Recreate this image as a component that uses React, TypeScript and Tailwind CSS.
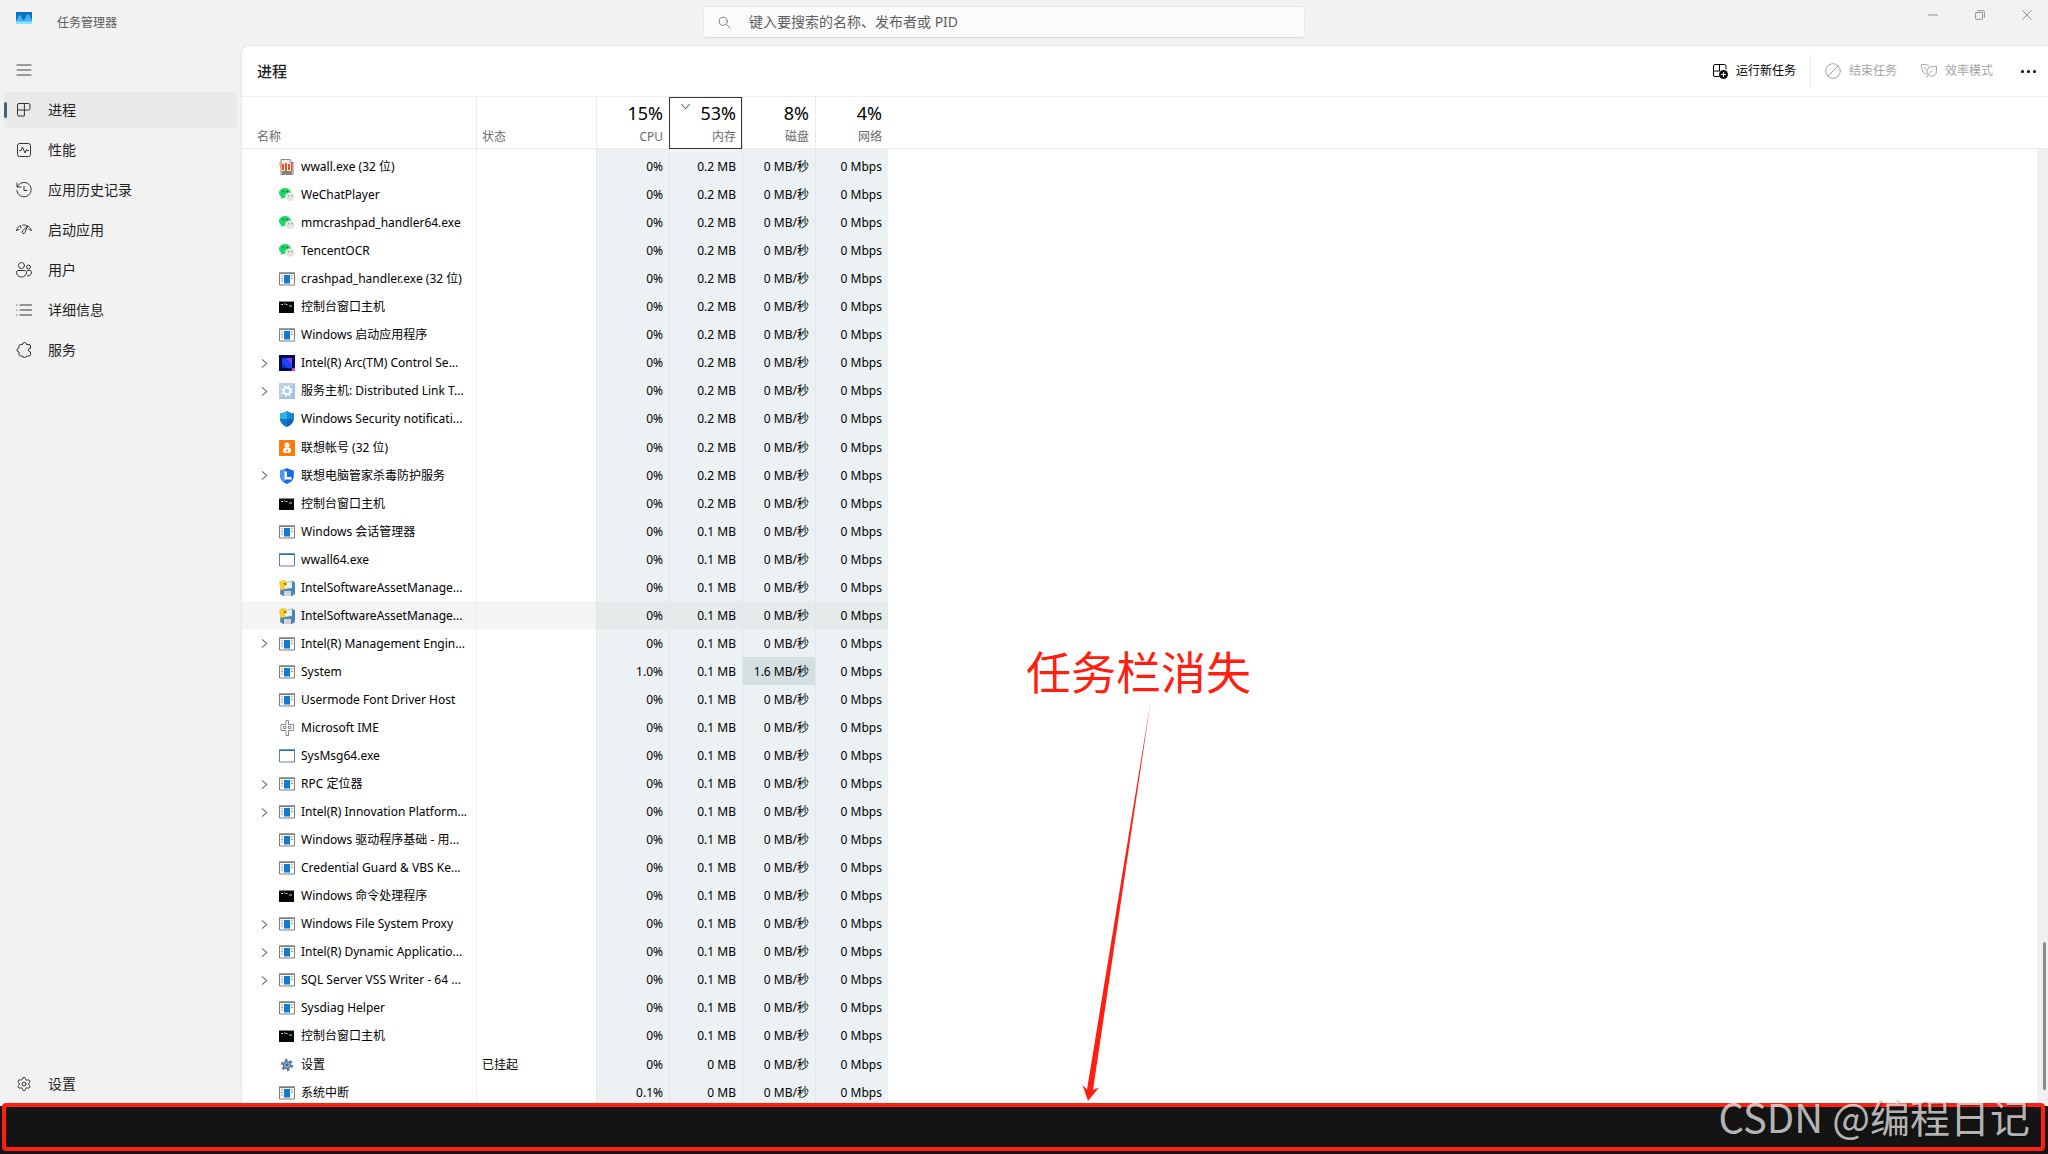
import { ReactElement, ReactNode } from 'react'
import { Settings } from 'lucide-react'

type IconName =
  | 'wwall'
  | 'wechat'
  | 'app'
  | 'cmd'
  | 'arc'
  | 'service'
  | 'shield'
  | 'account'
  | 'lenovo'
  | 'window'
  | 'installer'
  | 'ime'
  | 'gear'

interface Process {
  name: string
  icon: IconName
  memory: string
  cpu?: string
  disk?: string
  status?: string
  group?: boolean
  hovered?: boolean
}

const processes: Process[] = [
  { name: 'wwall.exe (32 位)', icon: 'wwall', memory: '0.2 MB' },
  { name: 'WeChatPlayer', icon: 'wechat', memory: '0.2 MB' },
  { name: 'mmcrashpad_handler64.exe', icon: 'wechat', memory: '0.2 MB' },
  { name: 'TencentOCR', icon: 'wechat', memory: '0.2 MB' },
  { name: 'crashpad_handler.exe (32 位)', icon: 'app', memory: '0.2 MB' },
  { name: '控制台窗口主机', icon: 'cmd', memory: '0.2 MB' },
  { name: 'Windows 启动应用程序', icon: 'app', memory: '0.2 MB' },
  { name: 'Intel(R) Arc(TM) Control Se...', icon: 'arc', memory: '0.2 MB', group: true },
  { name: '服务主机: Distributed Link T...', icon: 'service', memory: '0.2 MB', group: true },
  { name: 'Windows Security notificati...', icon: 'shield', memory: '0.2 MB' },
  { name: '联想帐号 (32 位)', icon: 'account', memory: '0.2 MB' },
  { name: '联想电脑管家杀毒防护服务', icon: 'lenovo', memory: '0.2 MB', group: true },
  { name: '控制台窗口主机', icon: 'cmd', memory: '0.2 MB' },
  { name: 'Windows 会话管理器', icon: 'app', memory: '0.1 MB' },
  { name: 'wwall64.exe', icon: 'window', memory: '0.1 MB' },
  { name: 'IntelSoftwareAssetManage...', icon: 'installer', memory: '0.1 MB' },
  { name: 'IntelSoftwareAssetManage...', icon: 'installer', memory: '0.1 MB', hovered: true },
  { name: 'Intel(R) Management Engin...', icon: 'app', memory: '0.1 MB', group: true },
  { name: 'System', icon: 'app', memory: '0.1 MB', cpu: '1.0%', disk: '1.6 MB/秒' },
  { name: 'Usermode Font Driver Host', icon: 'app', memory: '0.1 MB' },
  { name: 'Microsoft IME', icon: 'ime', memory: '0.1 MB' },
  { name: 'SysMsg64.exe', icon: 'window', memory: '0.1 MB' },
  { name: 'RPC 定位器', icon: 'app', memory: '0.1 MB', group: true },
  { name: 'Intel(R) Innovation Platform...', icon: 'app', memory: '0.1 MB', group: true },
  { name: 'Windows 驱动程序基础 - 用...', icon: 'app', memory: '0.1 MB' },
  { name: 'Credential Guard & VBS Ke...', icon: 'app', memory: '0.1 MB' },
  { name: 'Windows 命令处理程序', icon: 'cmd', memory: '0.1 MB' },
  { name: 'Windows File System Proxy', icon: 'app', memory: '0.1 MB', group: true },
  { name: 'Intel(R) Dynamic Applicatio...', icon: 'app', memory: '0.1 MB', group: true },
  { name: 'SQL Server VSS Writer - 64 ...', icon: 'app', memory: '0.1 MB', group: true },
  { name: 'Sysdiag Helper', icon: 'app', memory: '0.1 MB' },
  { name: '控制台窗口主机', icon: 'cmd', memory: '0.1 MB' },
  { name: '设置', icon: 'gear', memory: '0 MB', status: '已挂起' },
  { name: '系统中断', icon: 'app', memory: '0 MB', cpu: '0.1%' },
]

const usage = [
  { value: '15%', label: 'CPU' },
  { value: '53%', label: '内存', sorted: true },
  { value: '8%', label: '磁盘' },
  { value: '4%', label: '网络' },
]

const processIcons: Record<IconName, ReactNode> = {
  wwall: (
    <>
      <path d="M2 .5h9l3 3v12H2z" fill="#f4f1ee" stroke="#8d8985" />
      <path d="M11 .5v3h3" fill="#fff" stroke="#8d8985" />
      <path d="M0 4l3-1v7l-2-2z" fill="#f0a35a" />
      <path d="M3 5h2v6H3zM6 4h2v8H6zM9 5h2v6H9zM12 4h1.5v8H12z" fill="#e8542c" />
      <path d="M3 12h10v3H3z" fill="#8b8078" />
    </>
  ),
  wechat: (
    <>
      <path
        d="M6 1C2.700 1 0 3.200 0 6c0 1.600.9 3 2.200 3.900L1.700 12l2.200-1.200c.7.2 1.400.3 2.100.3 3.300 0 6-2.300 6-5.100S9.300 1 6 1z"
        fill="#20d76a"
      />
      <circle cx="4" cy="4.5" r=".9" fill="#0b7a3a" />
      <circle cx="8" cy="4.5" r=".9" fill="#0b7a3a" />
      <path
        d="M11 5.600c-2.800 0-5 1.800-5 4.100s2.200 4.100 5 4.100c.6 0 1.100-.1 1.600-.2l1.700.9-.4-1.600c1.200-.8 1.900-1.900 1.900-3.200 0-2.300-2.100-4.100-4.800-4.100z"
        fill="#e4e4e4"
      />
      <circle cx="9.5" cy="8.8" r=".7" fill="#8c8c8c" />
      <circle cx="12.7" cy="8.8" r=".7" fill="#8c8c8c" />
    </>
  ),
  app: (
    <>
      <path d="M.5 2h15v12H.5z" fill="#fafafa" stroke="#7d8080" />
      <path d="M0 1.500h16v1.500H0z" fill="#7d8080" />
      <path d="M5 4h6v8.500H5z" fill="#0f7ad0" />
      <path d="M2 5h2M2 7.500h2M2 10h2M12 5h2M12 7.500h2" stroke="#9a9d9d" />
    </>
  ),
  cmd: (
    <>
      <path d="M0 2h15v12H0z" fill="#050505" />
      <path d="M0 2h15v1H0z" fill="#8e8e8e" />
      <path d="M2 5.500h2M5 5h1.500M7 5.500h1.500M10 7h3" stroke="#d0d0d0" />
    </>
  ),
  arc: (
    <>
      <path d="M0 0h16v16H0z" fill="#050a4a" />
      <path d="M3 3h10v10H3z" fill="#1746f2" />
      <path d="M13 3v7L7 3z" fill="#8a3df0" />
      <path d="M3 13V8l6 5z" fill="#0f2fb8" />
      <path d="M13 13h3v3h-3z" fill="#e03cf0" />
    </>
  ),
  service: (
    <>
      <path d="M0 0h16v16H0z" fill="#a2c3e4" />
      <path d="M0 0h16L0 16z" fill="#b4d2ec" />
      <circle cx="8" cy="8" r="3.2" fill="#a9cdec" stroke="#fff" strokeWidth="2" />
      <circle cx="8" cy="8" r="5" fill="none" stroke="#fff" strokeWidth="1.6" strokeDasharray="1.96 1.96" />
    </>
  ),
  shield: (
    <>
      <path d="M8 0c2 1.500 4.500 2.300 7 2.400V7c0 4-2.800 7.200-7 9-4.200-1.800-7-5-7-9V2.400C3.500 2.300 6 1.500 8 0z" fill="#0b63b8" />
      <path d="M8 0v8H1V2.400C3.500 2.300 6 1.500 8 0z" fill="#2fb4ea" />
      <path d="M8 0c2 1.500 4.500 2.300 7 2.400V8H8z" fill="#1a8ad8" />
      <path d="M1 8h7v8C4 14.200 1.200 11.500 1 8z" fill="#1277c8" />
    </>
  ),
  account: (
    <>
      <rect width="16" height="16" rx="1" fill="#fb7a0a" />
      <circle cx="8" cy="5" r="2.6" fill="#fff" />
      <path d="M4 10.500C4 8 6 7.500 8 7.500s4 .5 4 3-1.500 2.500-4 2.500-4 0-4-2.500z" fill="#fff" />
      <path d="M8 8.500l1 2.500-1 1-1-1z" fill="#fb7a0a" />
    </>
  ),
  lenovo: (
    <>
      <path d="M8 0c2 1.300 4.200 2 6.800 2.200V8c0 3.500-2.500 6.300-6.800 8-4.300-1.700-6.800-4.500-6.800-8V2.200C3.800 2 6 1.300 8 0z" fill="#1a6be8" />
      <path d="M1.200 8V2.200C3 2.100 4.500 1.700 6 1v13C3 12.800 1.200 10.700 1.200 8z" fill="#4b97f7" />
      <path d="M5.500 3.500H8V9h4.500v2.500h-7z" fill="#fff" />
    </>
  ),
  window: (
    <>
      <path d="M.5 2h15v12H.5z" fill="#fff" stroke="#5f83b8" />
      <path d="M0 1.500h16V3H0z" fill="#1f6fc4" />
    </>
  ),
  installer: (
    <>
      <path d="M2 4l11-3.500 3 2V14l-3 2H4l-3-2z" fill="#4c86b5" />
      <path d="M5 3l8-2v7l-8 1z" fill="#e9eef3" />
      <path d="M5 11h7v5H5z" fill="#cfd5da" />
      <path d="M0 1.500L4 0l4 1v4L6 6.500V9L3 10 1 8z" fill="#f6cf33" />
      <circle cx="6" cy="4" r=".9" fill="#5b4a10" />
    </>
  ),
  ime: (
    <path
      d="M7 .5h2.500v4h5v6h-5v5H7v-5H2v-6h5zM4.500 6.500v2H7v-2zM9.500 6.500v2H12v-2z"
      fill="#fff"
      stroke="#8a8a8a"
    />
  ),
  gear: (
    <>
      <circle cx="8" cy="8" r="5" fill="none" stroke="#6e7d8c" strokeWidth="2.5" strokeDasharray="2.6 2.6" />
      <circle cx="8" cy="8" r="3.5" fill="#a6c8e8" stroke="#5c6f82" strokeWidth="1.5" />
      <circle cx="8" cy="8" r="1.8" fill="#1b6fc2" />
    </>
  ),
}

function ProcessIcon({ icon }: { icon: IconName }): ReactElement {
  return (
    <svg viewBox="0 0 16 16" className="size-4 shrink-0" aria-hidden="true">
      {processIcons[icon]}
    </svg>
  )
}

function LineIcon({ children, className = 'size-4' }: { children: ReactNode; className?: string }): ReactElement {
  return (
    <svg
      viewBox="0 0 16 16"
      className={className}
      fill="none"
      stroke="currentColor"
      strokeLinecap="round"
      strokeLinejoin="round"
      aria-hidden="true"
    >
      {children}
    </svg>
  )
}

const navItems = [
  {
    label: '进程',
    active: true,
    icon: <path d="M8 1.500H3A1.500 1.500 0 0 0 1.500 3v9.500A1.500 1.500 0 0 0 3 14h5zM8 1.500h4.500A1.500 1.500 0 0 1 14 3v3.500A1.500 1.500 0 0 1 12.500 8h-11" />,
  },
  {
    label: '性能',
    icon: (
      <>
        <rect x="1.5" y="1.5" width="13" height="13" rx="2" />
        <path d="M3.500 8.500h1.500L6.500 5l2.500 6 1.500-3.500.5 1h1.500" />
      </>
    ),
  },
  {
    label: '应用历史记录',
    icon: <path d="M1 1v4h4M1.300 4.800A7.200 7.200 0 1 1 .8 8.500M8 4.500V8.500h3" />,
  },
  {
    label: '启动应用',
    icon: (
      <>
        <path d="M.5 8.500C1.500 5.500 3 4 4.500 3.500L5 6M6.500 3.200C8 2.800 9.500 3 10.500 3.500M12.500 4.500c1.500 1 2.500 2.500 3 4L13 7.500M.5 8.500L3 7.500" />
        <path d="M11.500 4L9 10.500a1.500 1.500 0 1 1-2.500-1.500z" />
      </>
    ),
  },
  {
    label: '用户',
    icon: (
      <>
        <circle cx="5.5" cy="3.5" r="3" />
        <circle cx="12.5" cy="5" r="2" />
        <path d="M2.200 8.500h6.600c.9 0 1.700.7 1.700 1.700 0 3-2 4.800-5 4.800s-5-1.800-5-4.800c0-1 .8-1.700 1.700-1.700zM11.500 8.500h2.500c.8 0 1.500.7 1.500 1.500 0 2.500-1.500 4-4 4" />
      </>
    ),
  },
  {
    label: '详细信息',
    icon: <path d="M.7 3h.1M.7 8h.1M.7 13h.1M4 3h11.500M4 8h11.500M4 13h11.500" />,
  },
  {
    label: '服务',
    icon: (
      <path d="M14.500 6V4a1.500 1.500 0 0 0-1.500-1.500h-2.500a2 2 0 0 0-4 0H4.500A1.500 1.500 0 0 0 3 4v2a2 2 0 0 0 0 4v2.500A1.500 1.500 0 0 0 4.500 14h2a2 1.500 0 0 0 4 0H13a1.500 1.500 0 0 0 1.500-1.500V10a2 2 0 1 1 0-4z" />
    ),
  },
]

function NavItem({ label, icon, active }: { label: string; icon: ReactNode; active?: boolean }): ReactElement {
  return (
    <button
      type="button"
      className={`relative flex h-9 w-full items-center gap-4 rounded pl-3 text-sm ${active ? 'bg-[#e9e9e9]' : ''}`}
    >
      {active && <span className="absolute top-1/2 left-0 h-4 w-[3px] -translate-y-1/2 rounded bg-[#4a6373]" />}
      <span className="text-[#333]">{icon}</span>
      {label}
    </button>
  )
}

function TitleBar(): ReactElement {
  return (
    <header className="grid h-[45px] shrink-0 grid-cols-[1fr_602px_1fr] pr-10">
      <div className="flex items-center gap-[25px] pl-4">
        <svg viewBox="0 0 16 12" className="mb-[10px] h-3 w-4" aria-hidden="true">
          <path d="M0 0h16v12H0z" fill="#0c6fc0" />
          <path d="M0 9l3-6 2 1 2 4 2-1 2-5 2 1 3 5v4H0z" fill="#3cb4ee" />
          <path d="M0 9.500h16V12H0z" fill="#8fe0fb" />
        </svg>
        <span className="text-xs text-[#5a5a5a]">任务管理器</span>
      </div>
      <label className="mt-[6px] flex h-8 items-center rounded border border-[#e9e9e9] border-b-[#d9d9d9] bg-[#fbfbfb] pl-[14px]">
        <LineIcon className="size-[13px] text-[#666]">
          <circle cx="6.5" cy="6.5" r="5" />
          <path d="M10.500 10.500l4.500 4.500" />
        </LineIcon>
        <input
          type="search"
          aria-label="搜索"
          placeholder="键入要搜索的名称、发布者或 PID"
          className="ml-[18px] flex-1 bg-transparent text-sm outline-none placeholder:text-[#5f5f5f]"
        />
      </label>
      <div className="-mr-10 flex h-[29px] justify-end gap-1 text-[#8c8c8c]">
        <button type="button" aria-label="最小化" className="flex w-[43px] items-center justify-center">
          <LineIcon className="size-[10px]">
            <path d="M0 8h16" strokeWidth="1.5" />
          </LineIcon>
        </button>
        <button type="button" aria-label="还原" className="flex w-[43px] items-center justify-center">
          <LineIcon className="size-[10px]">
            <rect x="1" y="4" width="11" height="11" rx="1" strokeWidth="1.5" />
            <path d="M4 1h8.500A2.500 2.500 0 0 1 15 3.500V12" strokeWidth="1.5" />
          </LineIcon>
        </button>
        <button type="button" aria-label="关闭" className="flex w-[43px] items-center justify-center">
          <LineIcon className="size-[10px]">
            <path d="M1 1l14 14M15 1L1 15" strokeWidth="1.5" />
          </LineIcon>
        </button>
      </div>
    </header>
  )
}

function Toolbar(): ReactElement {
  return (
    <div className="flex h-[51px] shrink-0 items-center border-b border-[#efefef] pr-[10px] pl-[15px]">
      <h1 className="flex-1 text-[15px] font-medium">进程</h1>
      <button type="button" className="flex items-center gap-2 text-xs text-black">
        <LineIcon>
          <path d="M7 13.500H3A1.500 1.500 0 0 1 1.500 12V3A1.500 1.500 0 0 1 3 1.500h9.500A1.500 1.500 0 0 1 14 3v3M7.500 1.500V8M1.500 8H7" />
          <circle cx="11.5" cy="11.5" r="4.5" fill="#111" stroke="none" />
          <path d="M11.500 9.500v4M9.500 11.500h4" stroke="#fff" />
        </LineIcon>
        运行新任务
      </button>
      <span className="mr-[14px] ml-[14px] h-8 w-px bg-[#ececec]" />
      <button type="button" disabled className="flex items-center gap-2 text-xs text-[#a5a5a5]">
        <LineIcon>
          <circle cx="8" cy="8" r="7.3" />
          <path d="M3 13L13 3" />
        </LineIcon>
        结束任务
      </button>
      <button type="button" disabled className="ml-6 flex items-center gap-2 text-xs text-[#a5a5a5]">
        <LineIcon>
          <path d="M5 11C1.500 10 .5 7 .5 1.500c3.500 0 6.500-.5 8 2.500M3 4l2.500 3" />
          <path d="M15.500 3.500c0 5 .5 9.500-4.500 9.500-3.500 0-5-1.500-5-4 0-5 4.500-5.500 9.500-5.500zM11 8c-2 1-4 3-5.500 6.500" />
        </LineIcon>
        效率模式
      </button>
      <button type="button" aria-label="更多" className="ml-[26px] flex gap-[3px] p-[2px]">
        <span className="size-[3px] rounded-full bg-black" />
        <span className="size-[3px] rounded-full bg-black" />
        <span className="size-[3px] rounded-full bg-black" />
      </button>
    </div>
  )
}

function ProcessRow({ process }: { process: Process }): ReactElement {
  const { name, icon, memory, cpu = '0%', disk = '0 MB/秒', status, group, hovered } = process
  const plain = hovered ? 'bg-[#f5f5f5]' : ''
  const heat = hovered ? 'bg-[#e5ebeb]' : 'bg-[#ecf2f3]'
  const busy = disk === '0 MB/秒' ? heat : 'bg-[#d4dfe2]'
  const cell = 'border-l border-[#e1e7e8] pt-[5px] pb-[3px] pr-[6px] text-right'

  return (
    <tr>
      <td className={`pt-[5px] pb-[3px] pl-[18px] ${plain}`}>
        <div className="flex items-center">
          <span className="flex w-[19px] shrink-0">
            {group && (
              <button type="button" aria-label={`展开 ${name}`}>
                <LineIcon className="size-[9px] text-[#777]">
                  <path d="M4 1l8 7-8 7" strokeWidth="2" />
                </LineIcon>
              </button>
            )}
          </span>
          <ProcessIcon icon={icon} />
          <span className="ml-[6px]">{name}</span>
        </div>
      </td>
      <td className={`border-l border-[#efefef] pt-[5px] pb-[3px] pl-[5px] ${plain}`}>{status}</td>
      <td className={`${cell} ${heat}`}>{cpu}</td>
      <td className={`${cell} ${heat}`}>{memory}</td>
      <td className={`${cell} ${busy}`}>{disk}</td>
      <td className={`${cell} ${heat}`}>0 Mbps</td>
      <td />
    </tr>
  )
}

function ProcessTable(): ReactElement {
  return (
    <table className="h-full w-full table-fixed border-separate border-spacing-0 text-xs leading-5 whitespace-nowrap text-black">
      <colgroup>
        <col className="w-[234px]" />
        <col className="w-[120px]" />
        <col className="w-[73px]" />
        <col className="w-[73px]" />
        <col className="w-[73px]" />
        <col className="w-[73px]" />
        <col />
      </colgroup>
      <thead className="text-[#6a6a6a]">
        <tr className="h-[52px]">
          <th className="border-b border-[#ececec] pb-px pl-[15px] text-left align-bottom font-normal">名称</th>
          <th className="border-b border-l border-[#ececec] pb-px pl-[5px] text-left align-bottom font-normal">状态</th>
          {usage.map(({ value, label, sorted }) => (
            <th
              key={label}
              className={`relative border-b border-l border-[#ececec] pr-[6px] pb-px text-right align-bottom font-normal ${
                sorted ? 'outline outline-1 -outline-offset-1 outline-[#333]' : ''
              }`}
            >
              {sorted && (
                <LineIcon className="absolute top-[5px] left-[11px] size-[9px]">
                  <path d="M1 4l7 8 7-8" strokeWidth="2" />
                </LineIcon>
              )}
              <span className="block text-lg leading-7 text-black">{value}</span>
              <span className="block">{label}</span>
            </th>
          ))}
          <th className="border-b border-[#ececec]" />
        </tr>
      </thead>
      <tbody className="[&>tr:first-child>td]:pt-2">
        {processes.map((process, i) => (
          <ProcessRow key={i} process={process} />
        ))}
      </tbody>
    </table>
  )
}

export default function App(): ReactElement {
  return (
    <div className="flex h-screen flex-col overflow-hidden bg-[#f2f2f2] font-['Noto_Sans','Noto_Sans_CJK_SC',sans-serif] text-[#1f1f1f]">
      <TitleBar />
      <div className="flex min-h-0 flex-1">
        <nav className="flex w-[241px] shrink-0 flex-col gap-1 px-1 pt-[7px] pb-1">
          <button type="button" aria-label="导航" className="flex h-9 items-center pl-3 text-[#444]">
            <LineIcon>
              <path d="M1 3h14M1 8h14M1 13h14" />
            </LineIcon>
          </button>
          {navItems.map(({ label, icon, active }) => (
            <NavItem key={label} label={label} active={active} icon={<LineIcon>{icon}</LineIcon>} />
          ))}
          <div className="mt-auto">
            <NavItem label="设置" icon={<Settings className="size-4" strokeWidth={1.5} />} />
          </div>
        </nav>

        <main className="relative flex min-w-0 flex-1 flex-col rounded-tl-lg border-t border-l border-[#e6e6e6] bg-white">
          <Toolbar />
          <div className="relative min-h-0 flex-1">
            <ProcessTable />
            <div className="absolute top-[52px] right-0 bottom-0 w-[11px] bg-[#f0f0f0]">
              <div className="absolute right-[2px] bottom-4 h-[148px] w-[3px] rounded bg-[#8a8a8a]" />
            </div>
          </div>

          <div className="absolute bottom-1 left-[784px] flex flex-col text-[45px] leading-[52px] text-[#ff1e10]">
            <span>任务栏消失</span>
            <svg viewBox="0 0 225 403" className="h-[403px] w-[225px]" aria-hidden="true">
              <path d="M125 0L67 391 73 388.500 62 402 56.500 386 61 390.500z" fill="currentColor" />
            </svg>
          </div>
        </main>
      </div>

      <footer className="relative h-12 shrink-0 bg-[#141414]">
        <div className="absolute -top-[3px] right-[3px] bottom-[3px] left-[2px] rounded border-4 border-[#ff1e10]" />
        <span className="absolute right-[18px] bottom-[9px] font-['Noto_Sans_CJK_SC',sans-serif] text-[40px] leading-[58px] whitespace-nowrap text-white/70 [text-shadow:1px_1px_1px_rgb(0_0_0/0.4)]">
          CSDN @编程日记
        </span>
      </footer>
    </div>
  )
}
